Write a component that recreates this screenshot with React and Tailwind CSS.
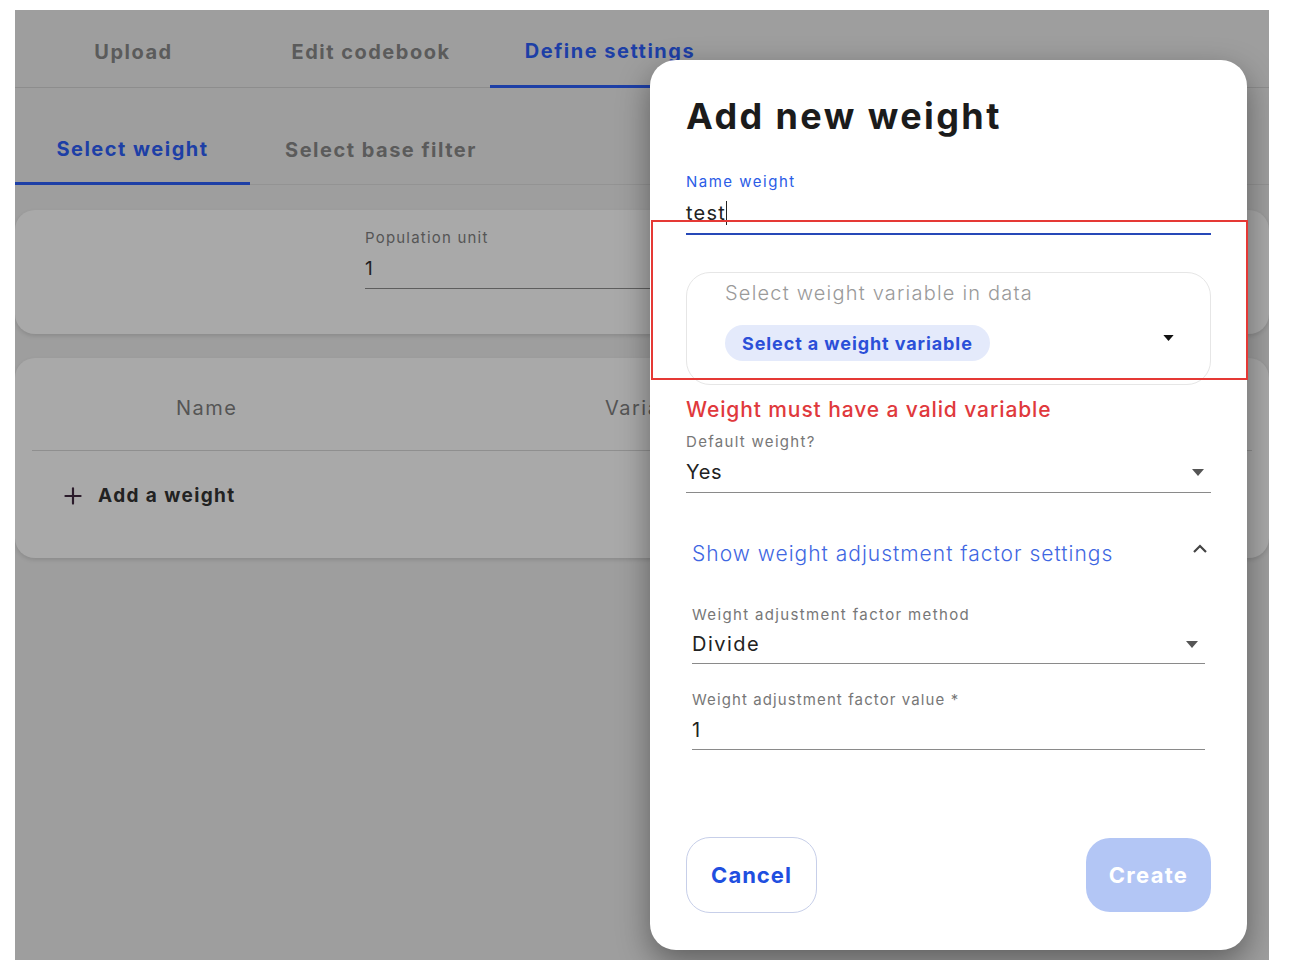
import { Plus } from 'lucide-react'

const font = { fontFamily: 'Inter, "Noto Sans", sans-serif' }

function Caret({ className = '' }) {
  return (
    <svg width="12" height="7" viewBox="0 0 12 7" className={className}>
      <path d="M0 0h12L6 7z" fill="currentColor" />
    </svg>
  )
}

function Background() {
  return (
    <div className="w-full h-full bg-[#9e9e9e] flex flex-col">
      <div className="flex h-[78px] border-b border-[#8d8d8d] tracking-[1.5px]">
        <div className="w-[237px] flex items-center justify-center pt-[7px] text-[20px] font-bold text-[#5b5b5b]">Upload</div>
        <div className="w-[238px] flex items-center justify-center pt-[7px] text-[20px] font-bold text-[#5b5b5b]">Edit codebook</div>
        <div className="w-[240px] flex items-center justify-center pt-[7px] text-[20px] font-bold text-[#1d3fa6] border-b-[3px] border-[#1d3fa6] -mb-px">Define settings</div>
      </div>
      <div className="flex h-[97px] border-b border-[#939393] tracking-[1.5px]">
        <div className="w-[235px] flex items-center justify-center pt-[28px] text-[20px] font-bold text-[#1d3fa6] border-b-[3px] border-[#1d3fa6] -mb-px">Select weight</div>
        <div className="w-[262px] flex items-center justify-center pt-[28px] text-[20px] font-bold text-[#5b5b5b]">Select base filter</div>
      </div>
      <div className="mt-[25px] h-[124px] rounded-[20px] bg-[#a9a9a9] shadow-[0_2px_4px_rgba(0,0,0,0.12)] pl-[350px] pt-[18px]">
        <div className="text-[15px] text-[#555] leading-[20px] tracking-[1.2px]">Population unit</div>
        <div className="w-[530px] border-b border-[#5e5e5e] text-[19px] text-[#222] leading-[28px] mt-[7px] pb-[5px]">1</div>
      </div>
      <div className="mt-[24px] h-[200px] rounded-[20px] bg-[#a9a9a9] shadow-[0_2px_4px_rgba(0,0,0,0.12)] px-[17px]">
        <div className="flex h-[93px] items-center border-b border-[#8f8f8f] text-[20px] text-[#555] tracking-[1.5px] pt-[8px]">
          <div className="pl-[144px] w-[573px]">Name</div>
          <div>Variable</div>
        </div>
        <div className="flex items-center gap-[12px] pl-[28px] mt-[31px] text-[19px] font-bold text-[#222] tracking-[1.4px]">
          <Plus size={26} strokeWidth={2} className="text-[#2b1b2b]" />
          <span>Add a weight</span>
        </div>
      </div>
    </div>
  )
}

function Modal() {
  return (
    <div className="absolute left-[635px] top-[50px] w-[597px] h-[890px] bg-white rounded-[26px] shadow-[0_12px_32px_rgba(0,0,0,0.4)] px-[36px] pt-[34px]">
      <h1 className="text-[36px] font-bold text-[#1b1b1b] leading-[44px] tracking-[2.4px]">Add new weight</h1>
      <div className="mt-[34px] text-[15px] text-[#2b5ce6] leading-[20px] tracking-[1.5px]">Name weight</div>
      <div className="w-[525px] border-b-2 border-[#2648b8] text-[20px] text-[#222] leading-[28px] pb-[6px] mt-[7px] flex items-center tracking-[1.2px]">
        test<span className="inline-block w-px h-[24px] bg-[#222]" />
      </div>
      <div className="mt-[37px] w-[525px] h-[113px] rounded-[24px] border border-[#e6e6e6] pl-[38px] pr-[36px] pt-[6px]">
        <div className="text-[20px] text-[#9a9a9a] font-light leading-[28px] tracking-[1.2px]">Select weight variable in data</div>
        <div className="flex items-center justify-between mt-[18px]">
          <div className="h-[36px] px-[17px] rounded-full bg-[#e4eafb] text-[#2b4fd8] text-[18px] font-bold flex items-center tracking-[0.9px]">Select a weight variable</div>
          <Caret className="text-[#111] w-[11px] h-[6px] mb-[10px]" />
        </div>
      </div>
      <div className="mt-[11px] text-[21px] font-medium text-[#e0393c] leading-[28px] tracking-[0.9px]">Weight must have a valid variable</div>
      <div className="mt-[8px] text-[15px] text-[#777] leading-[20px] tracking-[1.3px]">Default weight?</div>
      <div className="w-[525px] border-b border-[#8a8a8a] flex items-center justify-between text-[20px] text-[#222] leading-[28px] pb-[6px] mt-[6px]">
        <span className="tracking-[0.7px]">Yes</span>
        <Caret className="text-[#555] mr-[7px]" />
      </div>
      <div className="mt-[47px] pl-[6px] w-[525px] flex items-center justify-between">
        <span className="text-[21px] font-light text-[#3f67e2] leading-[28px] tracking-[1px]">Show weight adjustment factor settings</span>
        <svg width="16" height="10" viewBox="0 0 16 10" className="mr-[3px] -mt-[10px]">
          <path d="M2 8l6-6 6 6" stroke="#444" strokeWidth="2.2" fill="none" />
        </svg>
      </div>
      <div className="ml-[6px] w-[513px]">
        <div className="mt-[37px] text-[15px] text-[#777] leading-[20px] tracking-[1.35px]">Weight adjustment factor method</div>
        <div className="border-b border-[#8a8a8a] flex items-center justify-between text-[20px] text-[#222] leading-[28px] pb-[5px] mt-[5px]">
          <span className="tracking-[1.5px]">Divide</span>
          <Caret className="text-[#555] mr-[7px]" />
        </div>
        <div className="mt-[26px] text-[15px] text-[#777] leading-[20px] tracking-[1.1px]">Weight adjustment factor value *</div>
        <div className="border-b border-[#8a8a8a] text-[20px] text-[#222] leading-[28px] pb-[5px] mt-[6px]">1</div>
      </div>
      <div className="mt-[87px] w-[525px] flex items-center justify-between">
        <button className="w-[131px] h-[76px] rounded-[24px] border border-[#c7cfe9] text-[22px] font-bold text-[#1f4fe0] tracking-[1px]">Cancel</button>
        <button className="w-[125px] h-[74px] rounded-[24px] bg-[#b3c6f5] text-[22px] font-bold text-white tracking-[1.3px]">Create</button>
      </div>
    </div>
  )
}

export default function App() {
  return (
    <div style={font} className="w-[1292px] h-[976px] bg-white pl-[15px] pt-[10px]">
      <div className="relative w-[1254px] h-[950px] overflow-hidden">
        <Background />
        <Modal />
        <div className="absolute left-[636px] top-[210px] w-[597px] h-[160px] border-2 border-[#e53935] pointer-events-none" />
      </div>
    </div>
  )
}
